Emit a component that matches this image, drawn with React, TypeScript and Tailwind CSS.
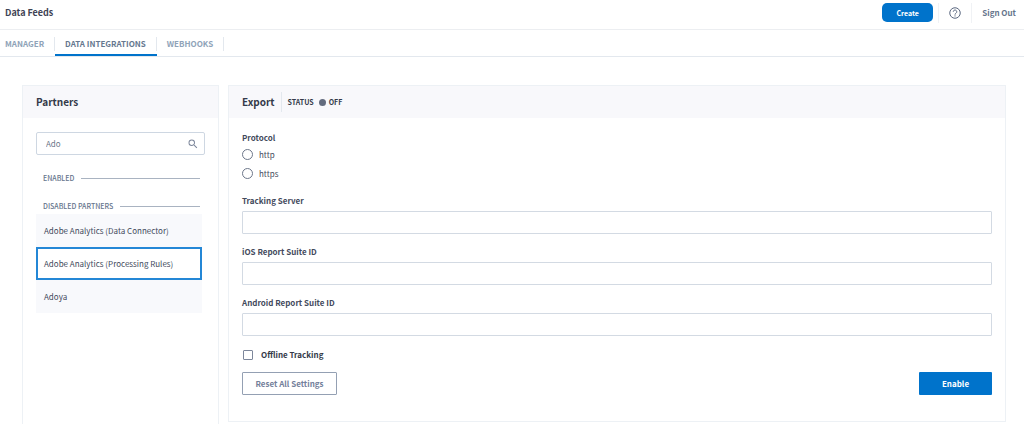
import { useState } from "react";

const TABS = ["MANAGER", "DATA INTEGRATIONS", "WEBHOOKS"];
const PARTNERS = [
  "Adobe Analytics (Data Connector)",
  "Adobe Analytics (Processing Rules)",
  "Adoya",
];
const FIELDS = [
  { id: "tracking-server", label: "Tracking Server" },
  { id: "ios-suite", label: "iOS Report Suite ID" },
  { id: "android-suite", label: "Android Report Suite ID" },
];

function HelpIcon() {
  return (
    <svg viewBox="0 0 24 24" className="size-3" fill="none" stroke="currentColor" strokeWidth="2">
      <circle cx="12" cy="12" r="10.5" />
      <path d="M8.500 9.500a3.500 3.500 0 1 1 5.600 2.800c-1.300 1-2.100 1.500-2.100 3" />
      <path d="M12 16.700v2.300" />
    </svg>
  );
}

function SearchIcon() {
  return (
    <svg viewBox="0 0 24 24" className="size-3 shrink-0 text-[#7d879b]" fill="currentColor">
      <path d="M15.500 14h-.79l-.28-.27A6.471 6.471 0 0 0 16 9.500 6.500 6.500 0 1 0 9.500 16c1.610 0 3.090-.59 4.230-1.570l.27.28v.79l5 4.990L20.490 19l-4.990-5zm-6 0C7.010 14 5 11.990 5 9.500S7.010 5 9.500 5 14 7.010 14 9.500 11.990 14 9.500 14z" />
    </svg>
  );
}

function Header() {
  return (
    <header className="flex h-[30px] shrink-0 items-center border-b border-[#eceef1] pr-2 pl-[5px]">
      <h1 className="flex-1 pb-[3px] text-[9px] leading-4 font-bold text-[#3e4354]">Data Feeds</h1>
      <div className="flex items-center pb-1">
        <button type="button" className="h-[19px] w-[51px] rounded-[5px] bg-[#0073cb] text-[7px] font-bold text-white">
          Create
        </button>
        <div className="ml-[5px] flex h-5 w-[34px] items-center justify-center border-x border-[#f0f2f5]">
          <button type="button" aria-label="Help" className="text-[#5b6880]">
            <HelpIcon />
          </button>
        </div>
        <a href="#sign-out" className="ml-[10px] text-[8px] font-bold text-[#66758c]">
          Sign Out
        </a>
      </div>
    </header>
  );
}

function Tabs() {
  const [active, setActive] = useState(TABS[1]);
  return (
    <nav className="flex h-[27px] shrink-0 items-stretch border-b border-[#e3e8ee]">
      {TABS.map((tab) => (
        <button
          key={tab}
          type="button"
          onClick={() => setActive(tab)}
          className={`flex items-center border-b-2 pt-[3px] text-[8px] font-bold first:-ml-[5px] ${
            tab === active ? "border-[#0073cb] text-[#66788f]" : "border-transparent text-[#8fa3b8]"
          }`}
        >
          <span className="flex h-[14px] items-center border-r border-[#e3e8ee] px-[10px]">{tab}</span>
        </button>
      ))}
    </nav>
  );
}

function Divider({ label }: { label: string }) {
  return (
    <h3 className="flex h-[14px] items-center gap-[7px] pr-[5px] pl-[7px] text-[7px] font-medium text-[#66758c]">
      {label}
      <span className="h-px flex-1 bg-[#a9b3c1]" />
    </h3>
  );
}

function Partners() {
  const [selected, setSelected] = useState(PARTNERS[1]);
  return (
    <aside className="w-[197px] shrink-0 border border-b-0 border-[#edf1f5]">
      <h2 className="flex h-8 items-center bg-[#f8f8fb] px-[13px] text-[10px] font-bold text-[#343a49]">
        Partners
      </h2>
      <div className="px-[13px] pt-[14px]">
        <label className="flex h-[23px] items-center rounded-[2px] border border-[#ced7e2] pr-[5px] pl-[9px]">
          <input
            aria-label="Search partners"
            defaultValue="Ado"
            className="h-4 min-w-0 flex-1 text-[8px] leading-4 text-[#6d778a] outline-none"
          />
          <SearchIcon />
        </label>
        <div className="mt-4 flex flex-col gap-[14px]">
          <Divider label="ENABLED" />
          <Divider label="DISABLED PARTNERS" />
        </div>
        <ul className="mt-px mr-[3px]">
          {PARTNERS.map((name) => (
            <li key={name}>
              <button
                type="button"
                onClick={() => setSelected(name)}
                className={`flex h-[33px] w-full items-center border-2 px-[6px] text-[8px] text-[#434a5c] ${
                  name === selected ? "border-[#2487d6] bg-white" : "border-transparent bg-[#f8f9fc]"
                }`}
              >
                {name}
              </button>
            </li>
          ))}
        </ul>
      </div>
    </aside>
  );
}

function ExportPanel() {
  return (
    <section className="min-w-0 flex-1 self-start border border-[#edf1f5]">
      <header className="flex h-8 items-center bg-[#f8f8fb] px-[13px] text-[#343a49]">
        <h2 className="border-r border-[#e3e8ee] pr-[6px] text-[10px] leading-5 font-bold">Export</h2>
        <p className="flex items-center pl-[6px] text-[7px] font-bold">
          STATUS
          <span className="mr-[3px] ml-[5px] size-[7px] rounded-full bg-[#626b7e]" />
          OFF
        </p>
      </header>
      <form className="px-[13px] pt-3 pb-[26px]" onSubmit={(e) => e.preventDefault()}>
        <fieldset>
          <legend className="text-[8px] leading-[15px] font-bold text-[#434a5c]">Protocol</legend>
          {["http", "https"].map((p) => (
            <label key={p} className="flex h-[19px] items-center gap-[6px] text-[8px] text-[#434a5c]">
              <input
                type="radio"
                name="protocol"
                value={p}
                className="size-[11px] appearance-none rounded-full border border-[#6d778a] checked:border-[3px]"
              />
              {p}
            </label>
          ))}
        </fieldset>
        <div className="mt-[10px] flex flex-col gap-[10px]">
          {FIELDS.map(({ id, label }) => (
            <div key={id} className="flex flex-col">
              <label htmlFor={id} className="h-[18px] text-[8px] leading-4 font-bold text-[#434a5c]">
                {label}
              </label>
              <input
                id={id}
                className="h-[23px] w-full rounded-[1px] border border-[#d3dae3] px-2 text-[8px] text-[#434a5c] outline-none"
              />
            </div>
          ))}
        </div>
        <label className="mt-[10px] flex h-[18px] items-center gap-2 pl-px text-[8px] font-bold text-[#343a49]">
          <input
            type="checkbox"
            className="size-[10px] appearance-none rounded-[1px] border border-[#7d879b] checked:bg-[#0073cb]"
          />
          Offline Tracking
        </label>
        <div className="mt-2 flex justify-between">
          <button type="reset" className="h-[23px] w-[95px] rounded-[1px] border border-[#94a0b3] text-[8px] font-bold text-[#73809a]">
            Reset All Settings
          </button>
          <button type="submit" className="h-[23px] w-[73px] rounded-[1px] bg-[#0073cb] text-[8px] font-bold text-white">
            Enable
          </button>
        </div>
      </form>
    </section>
  );
}

export default function App() {
  return (
    <div className="flex min-h-screen flex-col bg-white font-['Noto_Sans_CJK_SC',sans-serif] leading-4">
      <Header />
      <Tabs />
      <main className="flex flex-1 gap-[9px] pt-7 pr-[18px] pl-[22px]">
        <Partners />
        <ExportPanel />
      </main>
    </div>
  );
}
